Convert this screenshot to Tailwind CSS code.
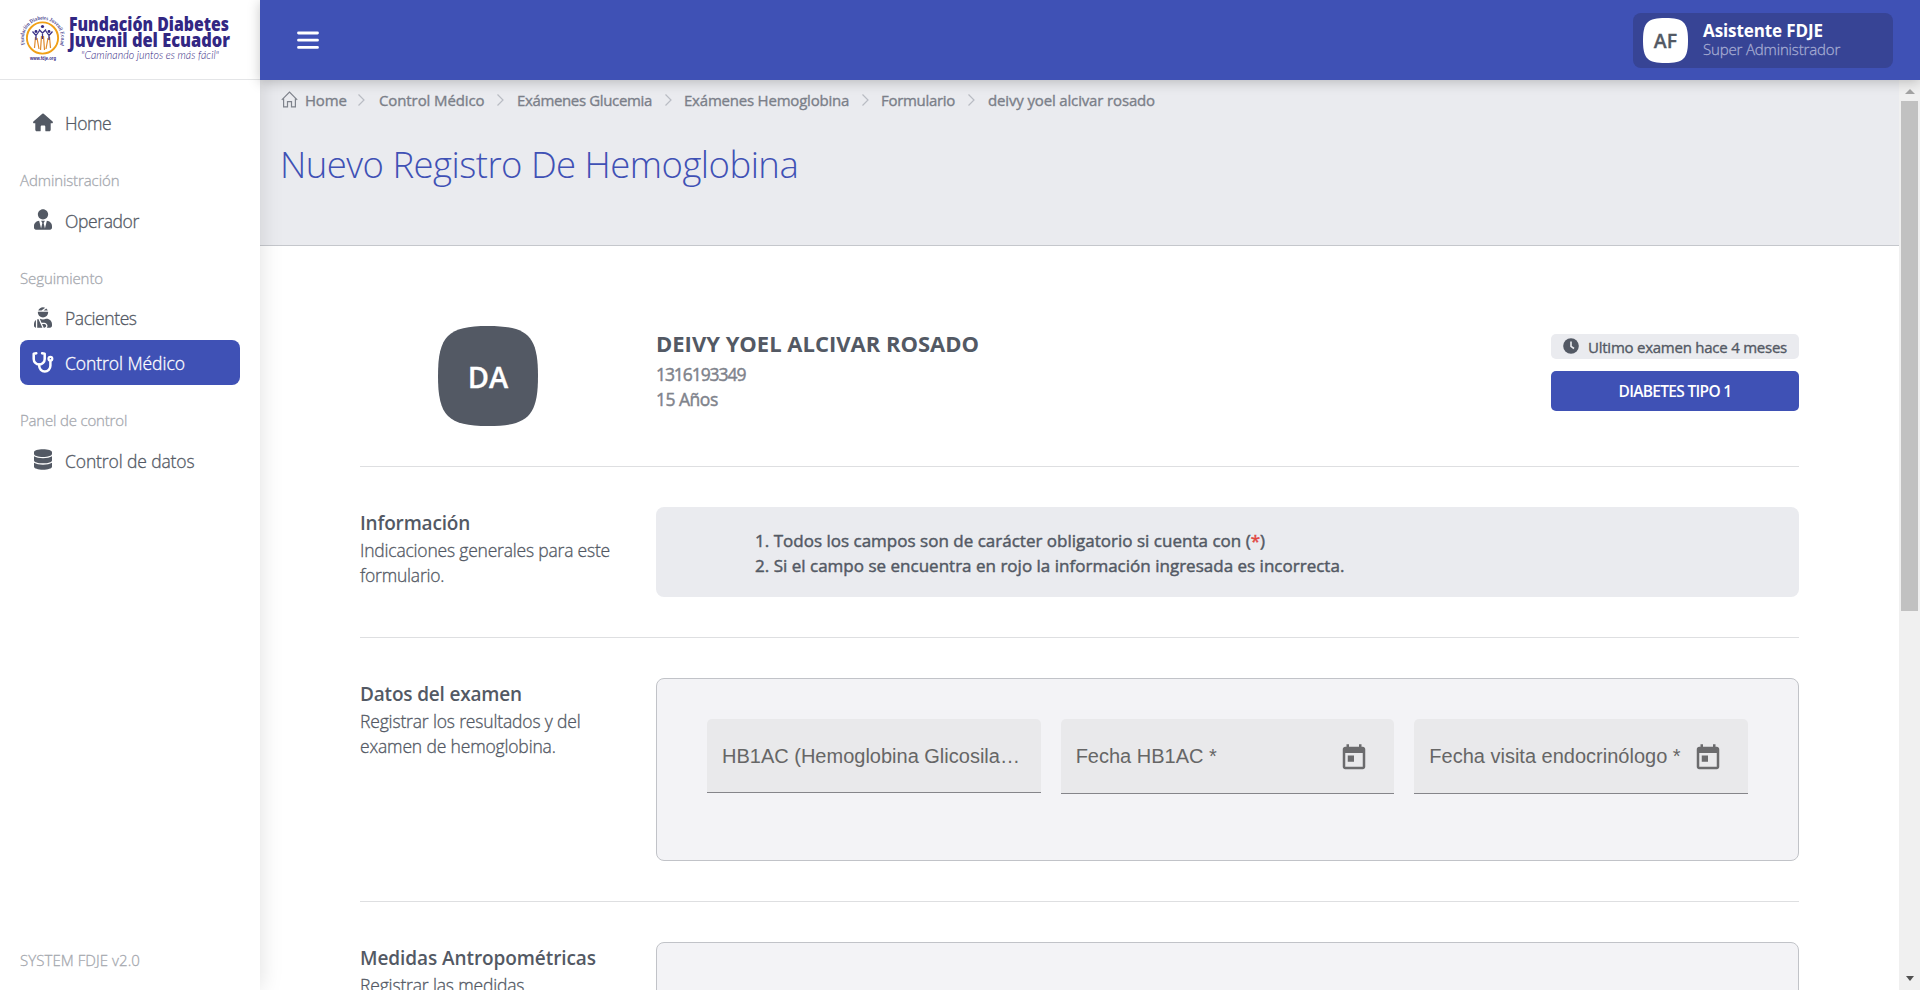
<!DOCTYPE html>
<html lang="es">
<head>
<meta charset="utf-8">
<title>FDJE</title>
<script src="https://cdn.jsdelivr.net/npm/@tailwindcss/browser@4"></script>
</head>
<body class="h-[990px] w-[1920px] overflow-hidden whitespace-nowrap bg-white font-['Open_Sans','Noto_Sans',sans-serif] text-[#535964]">
<div class="flex h-full">

  <!-- Sidebar -->
  <aside class="relative z-20 flex h-full w-[260px] shrink-0 flex-col bg-white font-light shadow-[0_0_22px_rgba(0,0,0,0.13)] [-webkit-text-stroke:0.3px]">
    <div class="h-20 border-b border-[#e4e5e7] pl-[21px] pt-4">
      <svg class="overflow-visible [-webkit-text-stroke:0]" width="210" height="46" viewBox="0 0 210 46">
        <defs><path id="ring" d="M4 28.500A18.600 18.600 0 1 1 39 28.500"/></defs>
        <text class="font-['Liberation_Serif',serif]" font-size="5.600" font-weight="700" fill="#4b4790"><textPath href="#ring" textLength="76" lengthAdjust="spacingAndGlyphs">Fundación Diabetes Juvenil Ecuador</textPath></text>
        <circle cx="21.500" cy="22" r="15.600" fill="#fff" stroke="#f0a017" stroke-width="1.900"/>
        <g fill="none" stroke="#e08a2c" stroke-width="1.200"><path d="M14.500 21l-1 11M16 22l2 11M20.500 20l-1 14M22.500 20l1 14M27 22l-2 11M28.500 21l1 11"/></g>
        <g fill="none" stroke="#3d3489" stroke-width="1.300"><path d="M11.500 15.500l3.500 4 3.500-5M18 13.500l3.500 3.500 3.500-3.500M24.500 14.500l3.500 5 3.500-4M15 19v5M21.500 16v7M28 19v5"/></g>
        <g fill="#322783"><circle cx="15" cy="15.500" r="1.400"/><circle cx="21.500" cy="10.500" r="1.600"/><circle cx="28" cy="15.500" r="1.400"/></g>
        <text class="font-['Liberation_Sans',sans-serif]" x="9" y="43.500" font-size="5" font-weight="700" fill="#322783" textLength="26" lengthAdjust="spacingAndGlyphs">www.fdje.org</text>
        <g class="font-['Open_Sans',sans-serif]" font-size="18.500" font-weight="800" fill="#322783">
          <text x="48" y="15.300" textLength="160" lengthAdjust="spacingAndGlyphs">Fundación Diabetes</text>
          <text x="48" y="31" textLength="161" lengthAdjust="spacingAndGlyphs">Juvenil del Ecuador</text>
        </g>
        <text class="font-['Lato',sans-serif]" x="60" y="42.500" font-size="11" font-style="italic" font-weight="300" fill="#322783" textLength="138" lengthAdjust="spacingAndGlyphs">"Caminando juntos es más fácil"</text>
      </svg>
    </div>

    <nav class="flex flex-1 flex-col px-5 pt-[21px] text-[17.500px] leading-[45px] tracking-[-0.2px]">
      <a class="flex h-[45px] items-center pl-[13px] tracking-[-0.400px]">
        <svg class="-mt-0.5 mr-[12px]" width="20" height="19" viewBox="0 0 20 19" fill="#535964"><path d="M9.300.800a1.100 1.100 0 0 1 1.400 0l8.900 7.700c.700.700.300 1.800-.600 1.800h-1.300v6.500c0 .900-.600 1.500-1.500 1.500h-3c-.500 0-.900-.400-.900-.900v-3.700c0-.700-.500-1.200-1.200-1.200H8.900c-.700 0-1.200.500-1.200 1.200v3.700c0 .500-.400.900-.900.900h-3c-.900 0-1.500-.600-1.500-1.500v-6.500H1c-.900 0-1.300-1.100-.6-1.800z"/></svg>
        Home
      </a>
      <div class="h-[53px] pt-[11px] text-[15px] leading-[46px] tracking-[-0.100px] text-[#a6a9af]">Administración</div>
      <a class="flex h-[45px] items-center pl-[14px] tracking-[-0.380px]">
        <svg class="-mt-1 mr-[13px]" width="18" height="21" viewBox="0 0 448 512" fill="#535964"><path d="M224 256c70.700 0 128-57.300 128-128S294.700 0 224 0 96 57.300 96 128s57.300 128 128 128zm95.800 32.600L272 480l-32-136 32-56h-96l32 56-32 136-47.800-191.400C56.900 292 0 350.300 0 422.400V464c0 26.500 21.500 48 48 48h352c26.500 0 48-21.500 48-48v-41.600c0-72.100-56.900-130.400-128.200-133.800z"/></svg>
        Operador
      </a>
      <div class="h-[51px] pt-[11px] text-[15px] leading-[46px] tracking-[-0.090px] text-[#a6a9af]">Seguimiento</div>
      <a class="flex h-[45px] items-center pl-[14px] pt-px tracking-[-0.420px]">
        <svg class="-mt-0.5 mr-[13px]" width="18" height="21" viewBox="0 0 448 512" fill="#535964"><path d="M277.370 11.980C261.080 4.470 243.110 0 224 0c-53.690 0-99.500 33.130-118.510 80h81.190l90.690-68.020zM342.510 80c-7.900-19.470-20.670-36.200-36.490-49.520L239.990 80h102.520zM224 256c70.690 0 128-57.310 128-128 0-5.480-.950-10.700-1.610-16H97.610c-.670 5.300-1.610 10.520-1.610 16 0 70.690 57.310 128 128 128zM80 299.700V512h128.260l-98.450-221.520A132.835 132.835 0 0 0 80 299.700zM0 464c0 26.510 21.490 48 48 48V320.240C18.880 344.890 0 381.260 0 422.400V464zm256-48h-55.380l42.670 96H256c26.470 0 48-21.530 48-48s-21.530-48-48-48zm57.600-128h-16.710c-22.240 10.180-46.880 16-72.890 16s-50.650-5.820-72.890-16h-7.370l42.670 96H256c44.110 0 80 35.890 80 80 0 18.080-6.260 34.590-16.410 48H400c26.510 0 48-21.490 48-48v-41.600c0-74.230-60.170-134.400-134.400-134.400z"/></svg>
        Pacientes
      </a>
      <a class="flex h-[45px] items-center rounded-lg bg-[#3f51b5] pl-3 pt-0.5 tracking-[-0.050px] text-white">
        <svg class="-mt-1 mr-[11px]" width="22" height="22" viewBox="0 0 22 22" fill="none" stroke="#fff" stroke-width="2.500" stroke-linecap="round" stroke-linejoin="round"><path d="M4.300 2.200L1.700 2.700v5.300a5.500 5.500 0 0 0 11 0V2.700l-2.600-.500"/><path d="M7.200 13.600v1.200a5.600 5.600 0 0 0 11.200 0V9.800"/><circle cx="18.400" cy="7.800" r="1.900" stroke-width="2.200"/></svg>
        Control Médico
      </a>
      <div class="h-[54px] pt-[12px] text-[15px] leading-[46px] tracking-[-0.180px] text-[#a6a9af]">Panel de control</div>
      <a class="flex h-[45px] items-center pl-[14px] tracking-[-0.120px]">
        <svg class="-mt-1 mr-[13px]" width="18" height="21" viewBox="0 0 448 512" fill="#535964"><path d="M448 73.143v45.714C448 159.143 347.667 192 224 192S0 159.143 0 118.857V73.143C0 32.857 100.333 0 224 0s224 32.857 224 73.143zM448 176v102.857C448 319.143 347.667 352 224 352S0 319.143 0 278.857V176c48.125 33.143 136.208 48.572 224 48.572S399.874 209.143 448 176zm0 160v102.857C448 479.143 347.667 512 224 512S0 479.143 0 438.857V336c48.125 33.143 136.208 48.572 224 48.572S399.874 369.143 448 336z"/></svg>
        Control de datos
      </a>
    </nav>
    <div class="px-5 pb-[20px] text-[15px] leading-5 tracking-[0.070px] text-[#a6a9af]">SYSTEM FDJE v2.0</div>
  </aside>

  <div class="flex h-full w-[1660px] flex-col">
    <!-- Top bar -->
    <header class="relative z-30 flex h-20 shrink-0 items-center justify-between bg-[#3f51b5] pl-[37px] pr-[27px] shadow-[0_2px_12px_rgba(0,0,0,0.22)]">
      <svg width="22" height="18" viewBox="0 0 22 18" stroke="#fff" stroke-width="2.800" stroke-linecap="round"><path d="M1.500 2h19M1.500 9.200h19M1.500 16.400h19"/></svg>
      <div class="flex h-[55px] w-[260px] items-center rounded-lg bg-[#374495] pl-[10px]">
        <div class="relative size-[45px]">
          <svg class="absolute inset-0" width="45" height="45" viewBox="0 0 200 200" fill="#fff"><path d="M100 0C20 0 0 20 0 100s20 100 100 100 100-20 100-100S180 0 100 0Z"/></svg>
          <div class="relative text-center text-[19.500px] font-semibold leading-[46px] [-webkit-text-stroke:0.3px]">AF</div>
        </div>
        <div class="-mt-0.5 ml-[15px] text-white">
          <div class="text-[17px] font-bold leading-[19px] tracking-[-0.100px]">Asistente FDJE</div>
          <div class="text-[15px] font-light leading-[18px] tracking-[-0.160px] text-[#a5abd2] [-webkit-text-stroke:0.3px]">Super Administrador</div>
        </div>
      </div>
    </header>

    <div class="flex min-h-0 flex-1">
      <main class="w-[1639px] overflow-hidden">
        <div class="h-[166px] border-b border-[#c5c7cc] bg-[#eaebef] pl-[21px] pt-2">
          <div class="flex h-6 items-center text-[15px] font-medium leading-6 tracking-[-0.190px] text-[#7b7f89] [-webkit-text-stroke:0.35px]">
            <svg class="-mt-px mr-[7px]" width="17" height="17" viewBox="0 0 17 17" fill="none" stroke="#7f838c" stroke-width="1.200"><path d="M.8 8.800L8.500 1l7.700 7.800M2.600 7.300v8.600h3.900v-5.200h4v5.200h3.900V7.300"/></svg>
            <span class="w-[53px]">Home</span>
            <svg class="mr-3.5" width="7" height="12" viewBox="0 0 7 12" fill="none" stroke="#b9bcc3" stroke-width="1.200"><path d="M.5.500L6 6 .5 11.500"/></svg>
            <span class="w-[118px] tracking-[-0.100px]">Control Médico</span>
            <svg class="mr-[13px]" width="7" height="12" viewBox="0 0 7 12" fill="none" stroke="#b9bcc3" stroke-width="1.200"><path d="M.5.500L6 6 .5 11.500"/></svg>
            <span class="w-[148px] tracking-[-0.360px]">Exámenes Glucemia</span>
            <svg class="mr-3" width="7" height="12" viewBox="0 0 7 12" fill="none" stroke="#b9bcc3" stroke-width="1.200"><path d="M.5.500L6 6 .5 11.500"/></svg>
            <span class="w-[178px] tracking-[-0.210px]">Exámenes Hemoglobina</span>
            <svg class="mr-3" width="7" height="12" viewBox="0 0 7 12" fill="none" stroke="#b9bcc3" stroke-width="1.200"><path d="M.5.500L6 6 .5 11.500"/></svg>
            <span class="w-[87px] tracking-[-0.300px]">Formulario</span>
            <svg class="mr-[13px]" width="7" height="12" viewBox="0 0 7 12" fill="none" stroke="#b9bcc3" stroke-width="1.200"><path d="M.5.500L6 6 .5 11.500"/></svg>
            <span class="tracking-[-0.150px]">deivy yoel alcivar rosado</span>
          </div>
          <h1 class="-ml-px mt-[27px] text-[36.500px] font-light leading-[50px] tracking-[-0.530px] text-[#3f51b5]">Nuevo Registro De Hemoglobina</h1>
        </div>

        <div class="ml-[100px] w-[1439px]">
          <!-- Patient -->
          <section class="flex h-[221px] items-start border-b border-[#dedfe1] pt-20">
            <div class="relative ml-[78px] size-[100px]">
              <svg class="absolute inset-0" width="100" height="100" viewBox="0 0 200 200" fill="#535964"><path d="M100 0C20 0 0 20 0 100s20 100 100 100 100-20 100-100S180 0 100 0Z"/></svg>
              <div class="relative text-center text-[29px] font-semibold leading-[102px] text-white [-webkit-text-stroke:0.3px]">DA</div>
            </div>
            <div class="ml-[118px] flex-1">
              <div class="pb-0.5 text-[22px] font-bold leading-[34px]">DEIVY YOEL ALCIVAR ROSADO</div>
              <div class="text-[17.500px] font-medium leading-[25px] text-[#7f838c] [-webkit-text-stroke:0.45px]"><span class="tracking-[-1.070px]">1316193349</span><br><span class="tracking-[-0.500px]">15 Años</span></div>
            </div>
            <div class="mt-2 w-[248px]">
              <div class="flex h-[25px] items-center rounded-[5px] bg-[#eaebef] pl-3 pt-0.5 text-[15px] font-medium tracking-[-0.240px] [-webkit-text-stroke:0.35px]">
                <svg class="-mt-[3px] mr-[9px]" width="16" height="16" viewBox="0 0 16 16"><circle cx="8" cy="8" r="7.800" fill="#535964"/><path d="M8 3.500V8.300l3 2.200" fill="none" stroke="#eaebef" stroke-width="1.600"/></svg>
                Ultimo examen hace 4 meses
              </div>
              <div class="mt-3 h-10 rounded-[5px] bg-[#3f51b5] text-center text-[15.500px] font-semibold leading-[41px] tracking-[-0.680px] text-white">DIABETES TIPO 1</div>
            </div>
          </section>

          <section class="flex h-[171px] border-b border-[#dedfe1] pt-10">
            <div class="w-[296px]">
              <h2 class="-mb-px text-[19px] font-semibold leading-[32px] tracking-[-0.180px]">Información</h2>
              <p class="text-[17.500px] font-light leading-[25px] tracking-[-0.200px] [-webkit-text-stroke:0.3px]">Indicaciones generales para este<br>formulario.</p>
            </div>
            <div class="h-[90px] flex-1 rounded-lg bg-[#eaebef] pl-[99px] pt-[21px] text-[17px] font-medium leading-[25px] tracking-[0.010px] [-webkit-text-stroke:0.45px]">
              1. Todos los campos son de carácter obligatorio si cuenta con (<span class="text-[#e0453f]">*</span>)<br>
              2. Si el campo se encuentra en rojo la información ingresada es incorrecta.
            </div>
          </section>

          <section class="flex h-[264px] border-b border-[#dedfe1] pt-10">
            <div class="w-[296px]">
              <h2 class="-mb-px text-[19px] font-semibold leading-[32px] tracking-[-0.180px]">Datos del examen</h2>
              <p class="text-[17.500px] font-light leading-[25px] tracking-[-0.160px] [-webkit-text-stroke:0.3px]">Registrar los resultados y del<br>examen de hemoglobina.</p>
            </div>
            <div class="grid h-[183px] flex-1 grid-cols-3 items-start gap-5 rounded-lg border border-[#c1c3c8] bg-[#f3f3f6] px-[50px] pt-10 font-['Liberation_Sans',sans-serif] text-[20px] text-[#666]">
              <div class="h-[74px] min-w-0 rounded-t-[5px] border-b border-[#85858a] bg-[#e9e9eb] pl-[15px] leading-[74px]">HB1AC (Hemoglobina Glicosila…</div>
              <div class="flex h-[75px] min-w-0 items-center justify-between rounded-t-[5px] border-b border-[#85858a] bg-[#e9e9eb] pl-[15px] pr-[25px] leading-[76px]">Fecha HB1AC *
                <svg class="mt-1" width="30" height="30" viewBox="0 0 24 24" fill="#6b6b6d"><path d="M19 3h-1V1h-2v2H8V1H6v2H5c-1.110 0-1.990.900-1.990 2L3 19c0 1.100.890 2 2 2h14c1.100 0 2-.900 2-2V5c0-1.100-.900-2-2-2zm0 16H5V8h14v11zM7 10h5v5H7z"/></svg>
              </div>
              <div class="flex h-[75px] min-w-0 items-center justify-between rounded-t-[5px] border-b border-[#85858a] bg-[#e9e9eb] pl-[15px] pr-[25px] leading-[76px]">Fecha visita endocrinólogo *
                <svg class="mt-1" width="30" height="30" viewBox="0 0 24 24" fill="#6b6b6d"><path d="M19 3h-1V1h-2v2H8V1H6v2H5c-1.110 0-1.990.900-1.990 2L3 19c0 1.100.890 2 2 2h14c1.100 0 2-.900 2-2V5c0-1.100-.900-2-2-2zm0 16H5V8h14v11zM7 10h5v5H7z"/></svg>
              </div>
            </div>
          </section>

          <section class="flex pt-10">
            <div class="w-[296px]">
              <h2 class="-mb-px text-[19px] font-semibold leading-[32px] tracking-[-0.080px]">Medidas Antropométricas</h2>
              <p class="text-[17.500px] font-light leading-[25px] tracking-[-0.160px] [-webkit-text-stroke:0.3px]">Registrar las medidas</p>
            </div>
            <div class="h-[183px] flex-1 rounded-lg border border-[#c1c3c8] bg-[#f3f3f6]"></div>
          </section>
        </div>
      </main>

      <!-- Scrollbar -->
      <div class="flex w-[21px] flex-col items-center bg-[#f0f0f0]">
        <svg class="mt-[9px]" width="10" height="5" viewBox="0 0 10 5" fill="#a3a3a3"><path d="M5 0l5 5H0z"/></svg>
        <div class="mt-[7px] h-[510px] w-[17px] bg-[#c1c1c1]"></div>
        <svg class="mb-[9px] mt-auto" width="8" height="5" viewBox="0 0 8 5" fill="#505050"><path d="M0 0h8L4 5z"/></svg>
      </div>
    </div>
  </div>
</div>
</body>
</html>
